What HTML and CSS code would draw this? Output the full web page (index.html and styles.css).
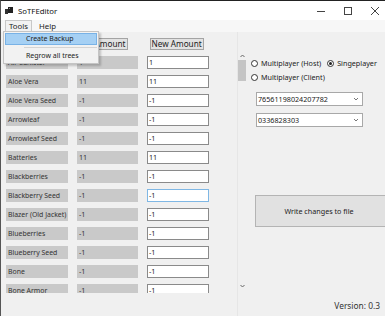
FILE: index.html
```html
<!DOCTYPE html>
<html lang="en">
<head>
  <meta charset="UTF-8">
  <title>SoTFEditor</title>
  <link rel="stylesheet" href="styles.css">
</head>
<body>
  <div class="window">
    <div class="titlebar">
      <svg class="app-icon" width="8" height="7" viewBox="0 0 8 7">
        <rect x="0" y="2" width="3" height="5" fill="#333"/>
        <rect x="3" y="0" width="5" height="6" fill="#222"/>
        <rect x="4" y="1" width="1" height="1" fill="#888"/>
      </svg>
      <span class="title">SoTFEditor</span>
      <div class="controls">
        <svg width="10" height="10" viewBox="0 0 10 10"><path d="M1 5.5h8" stroke="#444" stroke-width="1"/></svg>
        <svg width="10" height="10" viewBox="0 0 10 10"><rect x="1.5" y="1.5" width="7" height="7" fill="none" stroke="#444"/></svg>
        <svg width="10" height="10" viewBox="0 0 10 10"><path d="M1 1l8 8M9 1l-8 8" stroke="#444" stroke-width="1"/></svg>
      </div>
    </div>

    <div class="menubar">
      <span class="menu open">Tools</span>
      <span class="menu">Help</span>
      <div class="dropdown">
        <div class="drop-item active">Create Backup</div>
        <div class="drop-sep"></div>
        <div class="drop-item">Regrow all trees</div>
      </div>
    </div>

    <div class="main">
      <div class="items">
        <div class="heads">
          <span class="head head-current">Current Amount</span>
          <span class="head head-new">New Amount</span>
        </div>
        <div class="rows">
          <div class="row"><span class="name">Air Canister</span><span class="cur">1</span><span class="box">1</span></div>
          <div class="row"><span class="name">Aloe Vera</span><span class="cur">11</span><span class="box">11</span></div>
          <div class="row"><span class="name">Aloe Vera Seed</span><span class="cur">-1</span><span class="box">-1</span></div>
          <div class="row"><span class="name">Arrowleaf</span><span class="cur">-1</span><span class="box">-1</span></div>
          <div class="row"><span class="name">Arrowleaf Seed</span><span class="cur">-1</span><span class="box">-1</span></div>
          <div class="row"><span class="name">Batteries</span><span class="cur">11</span><span class="box">11</span></div>
          <div class="row"><span class="name">Blackberries</span><span class="cur">-1</span><span class="box">-1</span></div>
          <div class="row"><span class="name">Blackberry Seed</span><span class="cur">-1</span><span class="box focus">-1</span></div>
          <div class="row"><span class="name">Blazer (Old Jacket)</span><span class="cur">-1</span><span class="box">-1</span></div>
          <div class="row"><span class="name">Blueberries</span><span class="cur">-1</span><span class="box">-1</span></div>
          <div class="row"><span class="name">Blueberry Seed</span><span class="cur">-1</span><span class="box">-1</span></div>
          <div class="row"><span class="name">Bone</span><span class="cur">-1</span><span class="box">-1</span></div>
          <div class="row"><span class="name">Bone Armor</span><span class="cur">-1</span><span class="box">-1</span></div>
        </div>
      </div>

      <div class="vscroll">
        <svg width="5" height="4" viewBox="0 0 5 4"><path d="M0.5 3L2.5 1L4.5 3" fill="none" stroke="#666"/></svg>
        <div class="thumb"></div>
        <div class="track"></div>
        <svg width="5" height="4" viewBox="0 0 5 4"><path d="M0.5 1L2.5 3L4.5 1" fill="none" stroke="#666"/></svg>
      </div>

      <div class="side">
        <div class="radio-row">
          <label class="radio"><span class="dot"></span>Multiplayer (Host)</label>
          <label class="radio"><span class="dot on"></span>Singeplayer</label>
        </div>
        <div class="radio-row second">
          <label class="radio"><span class="dot"></span>Multiplayer (Client)</label>
        </div>
        <div class="combo first"><span>76561198024207782</span><svg width="6" height="4" viewBox="0 0 6 4"><path d="M1 1l2 2l2-2" fill="none" stroke="#777"/></svg></div>
        <div class="combo"><span>0336828303</span><svg width="6" height="4" viewBox="0 0 6 4"><path d="M1 1l2 2l2-2" fill="none" stroke="#777"/></svg></div>
        <div class="write-btn">Write changes to file</div>
        <div class="version">Version: 0.3</div>
      </div>
    </div>
  </div>
</body>
</html>
```

FILE: styles.css
```css
html, body {
  margin: 0;
  padding: 0;
}
body {
  font-family: "Noto Sans", "Open Sans", sans-serif;
  font-size: 7.2px;
  color: #222;
  background: #f0f0f0;
}
.window {
  width: 385px;
  height: 316px;
  box-sizing: border-box;
  border-top: 1px solid #222;
  border-left: 1px solid #555;
  display: flex;
  flex-direction: column;
  overflow: hidden;
  position: relative;
}
.titlebar {
  height: 19px;
  flex-shrink: 0;
  background: #fff;
  display: flex;
  align-items: center;
  padding-left: 4px;
}
.app-icon {
  margin-right: 5px;
}
.title {
  font-size: 7.8px;
  color: #111;
}
.controls {
  margin-left: auto;
  display: flex;
  gap: 17px;
  margin-right: 5px;
}
.menubar {
  height: 12px;
  flex-shrink: 0;
  background: #f7f7f7;
  display: flex;
  align-items: center;
  padding-left: 4px;
  position: relative;
  font-size: 7.8px;
}
.menu {
  padding: 0 3px;
  height: 11px;
  line-height: 11px;
  margin-right: 3px;
  border: 1px solid transparent;
}
.menu.open {
  border-color: #c8c8c8;
  background: #f2f2f2;
}
.dropdown {
  position: absolute;
  left: 2px;
  top: 11px;
  width: 94px;
  padding: 1px 0;
  background: #f2f2f2;
  border: 1px solid #c4c4c4;
  box-shadow: 2px 2px 2px rgba(0,0,0,0.2);
  z-index: 5;
  font-size: 7px;
}
.drop-item {
  height: 10px;
  line-height: 10px;
  padding-left: 20px;
  margin: 0 1px;
  border: 1px solid transparent;
}
.drop-item.active {
  background: #a5d0f4;
  border-color: #78b2e6;
}
.drop-sep {
  height: 1px;
  background: #d4d4d4;
  margin: 2px 1px 2px 20px;
}
.main {
  flex: 1;
  display: flex;
}
.items {
  width: 236px;
  flex-shrink: 0;
  height: 261px;
  overflow: hidden;
}
.heads {
  height: 12px;
  margin-top: 6px;
  display: flex;
  font-size: 8.2px;
}
.head {
  background: #e2e2e2;
  border: 1px solid #a4a4a4;
  padding: 0 1px;
  line-height: 10px;
  white-space: nowrap;
}
.head-current {
  margin-left: 60px;
}
.head-new {
  margin-left: 22px;
}
.rows {
  margin-top: 6px;
  display: flex;
  flex-direction: column;
  gap: 6px;
}
.row {
  display: grid;
  grid-template-columns: 62px 61px 62px;
  column-gap: 9px;
  padding-left: 5px;
  height: 13px;
}
.name, .cur {
  background: #c9c9c9;
  line-height: 13px;
  padding-left: 2px;
  white-space: nowrap;
  overflow: hidden;
  color: #333;
}
.name {
  font-size: 6.9px;
}
.box {
  background: #fff;
  border: 1px solid #8a8a8a;
  line-height: 11px;
  padding-left: 1px;
}
.box.focus {
  border-color: #7fb7e4;
}
.vscroll {
  width: 9px;
  flex-shrink: 0;
  display: flex;
  flex-direction: column;
  align-items: center;
  padding-top: 22px;
  padding-bottom: 28px;
  box-sizing: border-box;
  height: 284px;
  border-left: 1px solid #e6e6e6;
}
.thumb {
  width: 8px;
  height: 21px;
  margin-top: 2px;
  background: #c5c5c5;
}
.track {
  flex: 1;
}
.side {
  flex: 1;
  min-width: 0;
  position: relative;
  padding-left: 5px;
}
.radio-row {
  display: flex;
  margin-top: 26px;
  height: 10px;
}
.radio-row.second {
  margin-top: 4px;
}
.radio {
  display: flex;
  align-items: center;
  margin-right: 6px;
  white-space: nowrap;
}
.dot {
  width: 7px;
  height: 7px;
  border: 1px solid #333;
  border-radius: 50%;
  background: #fff;
  margin-right: 3px;
  box-sizing: border-box;
  position: relative;
}
.dot.on::after {
  content: "";
  position: absolute;
  left: 1px;
  top: 1px;
  width: 3px;
  height: 3px;
  border-radius: 50%;
  background: #222;
}
.combo {
  width: 107px;
  height: 14px;
  margin-left: 5px;
  margin-top: 7px;
  background: #fff;
  border: 1px solid #a8a8a8;
  box-sizing: border-box;
  display: flex;
  align-items: center;
  justify-content: space-between;
  padding: 0 3px 0 1px;
}
.combo.first {
  margin-top: 10px;
}
.write-btn {
  margin-top: 68px;
  margin-left: 4px;
  height: 32px;
  width: 140px;
  box-sizing: border-box;
  background: #e1e1e1;
  border: 1px solid #b4b4b4;
  display: flex;
  align-items: center;
  justify-content: center;
  padding-right: 12px;
}
.version {
  position: absolute;
  right: 5px;
  bottom: 5px;
  font-size: 8.4px;
  color: #333;
}
```
